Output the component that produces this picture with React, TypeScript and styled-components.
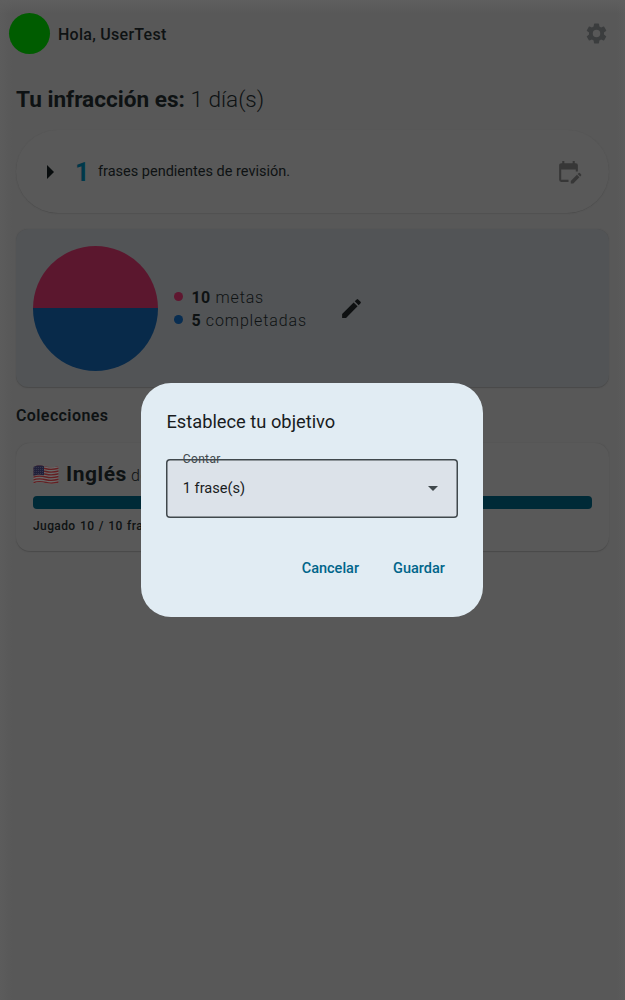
import React from "react";
import styled, { createGlobalStyle } from "styled-components";

const Global = createGlobalStyle`
  * { box-sizing: border-box; }
  body { margin: 0; background: #585858; font-family: Roboto, "Liberation Sans", sans-serif; color: #0e1213; }
`;

const Page = styled.div`
  position: relative;
  height: 1000px;
  overflow: hidden;
  padding: 12px 16px 0;
  background:
    linear-gradient(#5f5f5f, rgba(88, 88, 88, 0) 14px),
    linear-gradient(90deg, #5c5c5c, #585858 12px calc(100% - 8px), #5c5c5c);
`;

const Header = styled.header`
  display: flex;
  align-items: center;
  height: 42px;
  margin-left: -8px;
`;

const Avatar = styled.div`
  width: 41px;
  height: 41px;
  margin-left: 1px;
  border-radius: 50%;
  background: #005c00;
`;

const Greeting = styled.div`
  margin-left: 8px;
  flex: 1;
  font-size: 16px;
  font-weight: 500;
  letter-spacing: 0.27px;
  line-height: 24px;
  padding-top: 3px;
`;

const Streak = styled.h1`
  margin: 32px 0 0;
  height: 28px;
  font-size: 22.6px;
  line-height: 28px;
  font-weight: 300;
  white-space: nowrap;
  b { font-weight: 700; }
`;

const Card = styled.section<{ $radius: number; $tint?: boolean }>`
  border-radius: ${(p) => p.$radius}px;
  background: ${(p) => (p.$tint ? "#525456" : "#595959")};
  box-shadow: 0 0.5px 1px #4a4a4a;
`;

const Pending = styled(Card)`
  display: flex;
  align-items: center;
  height: 83px;
  margin-top: 16px;
  padding: 0 28.5px 0 31px;
`;

const Count = styled.span`
  width: 20px;
  margin-left: 21px;
  font-size: 25px;
  font-weight: 700;
  color: #00384a;
  padding-top: 2px;
`;

const PendingText = styled.span`
  flex: 1;
  margin-left: 3px;
  font-size: 14.5px;
`;

const Goals = styled(Card)`
  display: flex;
  align-items: center;
  height: 158px;
  margin-top: 16px;
  padding: 0 0 0 17px;
`;

const Pie = styled.div`
  width: 125px;
  height: 125px;
  border-radius: 50%;
  background: linear-gradient(#5b172e 0 50%, #082a4a 50% 100%);
`;

const Legend = styled.div`
  margin: 1px 32px 0 16px;
`;

const LegendItem = styled.div`
  display: flex;
  align-items: center;
  height: 23px;
  font-size: 16px;
  font-weight: 300;
  letter-spacing: 0.87px;
  white-space: pre;
  b { font-weight: 700; letter-spacing: 0.4px; }
`;

const Dot = styled.i<{ $color: string }>`
  width: 9px;
  height: 9px;
  margin: -1px 8.5px 0 0;
  border-radius: 50%;
  background: ${(p) => p.$color};
`;

const SectionTitle = styled.h2`
  margin: 17px 0 0;
  font-size: 16px;
  line-height: 24px;
  font-weight: 600;
  letter-spacing: 0.4px;
`;

const Collection = styled(Card)`
  height: 108px;
  margin-top: 15px;
  padding: 17px 17px 0;
`;

const Language = styled.div`
  display: flex;
  align-items: center;
  height: 29px;
  gap: 7px;
  font-size: 16px;
  font-weight: 300;
  letter-spacing: 0.6px;
  b { display: inline-block; margin-right: 4px; font-size: 21px; font-weight: 700; letter-spacing: 0.55px; }
  span { line-height: 29px; }
`;

const Progress = styled.div`
  height: 13px;
  margin-top: 7px;
  border-radius: 4px;
  background: #002a37;
`;

const Played = styled.div`
  margin-top: 8px;
  font-size: 12px;
  line-height: 18px;
  font-weight: 500;
  letter-spacing: 0.4px;
  word-spacing: 1px;
`;

const Dialog = styled.div`
  position: absolute;
  left: 141.4px;
  top: 383px;
  width: 341.5px;
  height: 234px;
  padding: 25px;
  border-radius: 30px;
  background: #e1ecf3;
  color: #191c1e;
`;

const DialogTitle = styled.h3`
  margin: 0;
  font-size: 18.3px;
  line-height: 28px;
  font-weight: 400;
`;

const Select = styled.div`
  position: relative;
  display: flex;
  align-items: center;
  justify-content: space-between;
  height: 58.5px;
  margin-top: 23px;
  padding: 0 20px 0 16.4px;
  box-shadow: inset 0 0 0 1.5px #40484c;
  border-radius: 4px;
  background: #dce2e9;
  font-size: 14.6px;
`;

const FieldLabel = styled.label`
  position: absolute;
  left: 16.4px;
  top: -8px;
  font-size: 12px;
  line-height: 16px;
  letter-spacing: 0.35px;
  color: #40484c;
`;

const Actions = styled.div`
  display: flex;
  justify-content: flex-end;
  gap: 34px;
  margin-top: 39.5px;
  padding-right: 13px;
`;

const TextButton = styled.button`
  border: 0;
  padding: 0;
  background: none;
  font: 500 14.5px/24px Roboto, sans-serif;
  color: #00658a;
`;

const GearIcon = () => (
  <svg width="25" height="25" viewBox="0 0 24 24" fill="#3b3d3e">
    <path d="M19.14 12.94c.04-.3.06-.61.06-.94 0-.32-.02-.64-.07-.94l2.03-1.58a.49.49 0 0 0 .12-.61l-1.92-3.32a.49.49 0 0 0-.59-.22l-2.39.96a7 7 0 0 0-1.62-.94l-.36-2.54a.48.48 0 0 0-.48-.41h-3.84a.47.47 0 0 0-.47.41l-.36 2.54c-.59.24-1.13.57-1.62.94l-2.39-.96a.48.48 0 0 0-.59.22L2.74 8.87a.47.47 0 0 0 .12.61l2.03 1.58c-.05.3-.09.63-.09.94s.02.64.07.94l-2.03 1.58a.49.49 0 0 0-.12.61l1.92 3.32c.12.22.37.29.59.22l2.39-.96c.5.38 1.03.7 1.62.94l.36 2.54c.05.24.24.41.48.41h3.84c.24 0 .44-.17.47-.41l.36-2.54a6.7 6.7 0 0 0 1.62-.94l2.39.96c.22.08.47 0 .59-.22l1.92-3.32a.47.47 0 0 0-.12-.61zM12 15.6a3.6 3.6 0 1 1 0-7.2 3.6 3.6 0 0 1 0 7.2z" />
  </svg>
);

const CalendarIcon = () => (
  <svg width="25" height="25" viewBox="0 0 24 24" fill="#373737" overflow="visible">
    <path d="M12 22H5a2 2 0 0 1-2-2V6c0-1.1.9-2 2-2h1V2h2v2h8V2h2v2h1a2 2 0 0 1 2 2v6h-2v-2H5v10h7z" />
    <path d="M14.2 23.4v-2.4l5.9-5.9 2.4 2.4-5.9 5.9zM23.2 16.8l-2.4-2.4.8-.8a1 1 0 0 1 1.4 0l1 1a1 1 0 0 1 0 1.4z" />
  </svg>
);

const PencilIcon = () => (
  <svg width="25" height="25" viewBox="0 0 24 24" fill="#0e1011">
    <path d="M3 17.25V21h3.75L17.81 9.94l-3.75-3.75L3 17.25zM20.71 7.04a1 1 0 0 0 0-1.41l-2.34-2.34a1 1 0 0 0-1.41 0l-1.83 1.83 3.75 3.75 1.83-1.83z" />
  </svg>
);

const FlagIcon = () => (
  <svg width="26" height="20" viewBox="0 0 26 20">
    <defs>
      <clipPath id="wave">
        <path d="M.5 1.9C5-.1 8 .4 13 1.6s8 .8 12.5-.6v16.8c-4.5 1.5-8 1.3-12.5.3S5 16.7.5 18.8z" />
      </clipPath>
    </defs>
    <g clipPath="url(#wave)">
      <rect width="26" height="20" fill="#696969" />
      {[0, 1, 2, 3, 4, 5, 6].map((i) => (
        <path key={i} d={`M0 ${1.3 + i * 2.75}c5-2 8-1.5 13-.3s8 .8 13-.6`} fill="none" stroke="#641f22" strokeWidth="1.4" />
      ))}
      <path d="M0 0h11v10.2C7 9.3 4 9.4 0 11z" fill="#20203a" />
      {[2.5, 4.5, 6.5, 8.5].map((y) => (
        <path key={y} d={`M1.5 ${y}H11`} stroke="#50505f" strokeWidth=".7" strokeDasharray=".7 1.2" />
      ))}
    </g>
  </svg>
);

export default function App() {
  return (
    <>
      <Global />
      <Page>
        <Header>
          <Avatar />
          <Greeting>Hola, UserTest</Greeting>
          <GearIcon />
        </Header>
        <Streak><b>Tu infracción es:</b> 1 día(s)</Streak>
        <Pending $radius={42}>
          <svg width="7" height="14" viewBox="0 0 7 14"><path d="M0 0l7 7-7 7z" fill="#080c0d" /></svg>
          <Count>1</Count>
          <PendingText>frases pendientes de revisión.</PendingText>
          <CalendarIcon />
        </Pending>
        <Goals $radius={12} $tint>
          <Pie />
          <Legend>
            <LegendItem><Dot $color="#5f1730" /><b>10</b> metas</LegendItem>
            <LegendItem><Dot $color="#082d51" /><b>5</b> completadas</LegendItem>
          </Legend>
          <PencilIcon />
        </Goals>
        <SectionTitle>Colecciones</SectionTitle>
        <Collection $radius={14}>
          <Language><FlagIcon /><span><b>Inglés</b>de</span></Language>
          <Progress />
          <Played>Jugado 10 / 10 frases</Played>
        </Collection>
        <Dialog role="dialog">
          <DialogTitle>Establece tu objetivo</DialogTitle>
          <Select>
            <FieldLabel>Contar</FieldLabel>
            <span>1 frase(s)</span>
            <svg width="10" height="5" viewBox="0 0 10 5"><path d="M0 0h10L5 5z" fill="#40484c" /></svg>
          </Select>
          <Actions>
            <TextButton>Cancelar</TextButton>
            <TextButton>Guardar</TextButton>
          </Actions>
        </Dialog>
      </Page>
    </>
  );
}
